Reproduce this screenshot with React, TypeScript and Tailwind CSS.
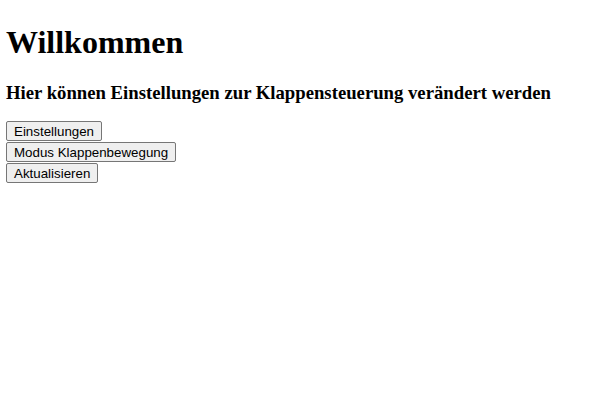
export default function App() {
  const btn =
    "block h-[20px] border border-[#767676] bg-[#efefef] rounded-[2px] px-[7px] text-[13.333px] leading-[normal] text-black font-['Liberation_Sans',Arial,sans-serif]";
  return (
    <div className="min-h-screen bg-white px-[6px] pt-[24px] font-['Liberation_Serif','Times_New_Roman',serif] text-black">
      <h1 className="text-[32px] font-bold leading-[normal] mb-[20.5px]">Willkommen</h1>
      <h3 className="text-[18.72px] font-bold leading-[normal] mb-[17.5px]">
        Hier können Einstellungen zur Klappensteuerung verändert werden
      </h3>
      <div className="flex flex-col items-start gap-[1px]">
        <button className={btn}>Einstellungen</button>
        <button className={btn}>Modus Klappenbewegung</button>
        <button className={btn}>Aktualisieren</button>
      </div>
    </div>
  );
}
